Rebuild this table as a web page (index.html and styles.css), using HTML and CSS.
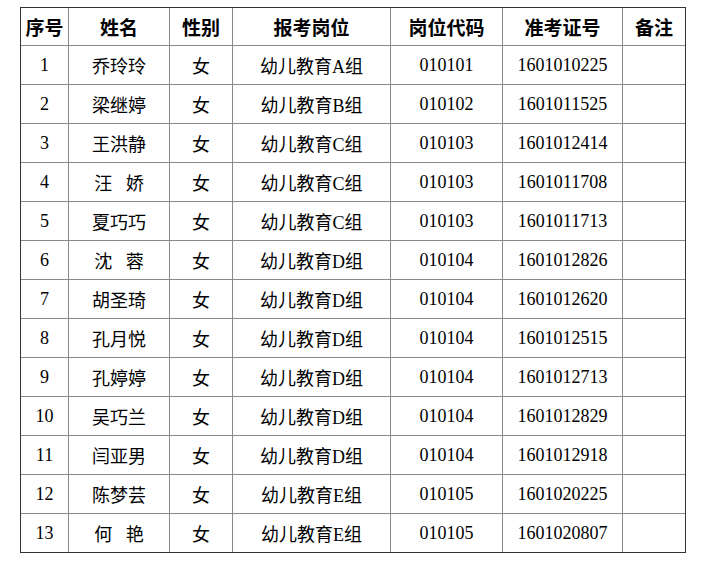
FILE: index.html
```html
<!DOCTYPE html>
<html lang="zh-CN">
<head>
<meta charset="utf-8">
<title>名单</title>
<link rel="stylesheet" href="styles.css">
</head>
<body>
<table class="roster">
  <colgroup>
    <col class="c-no"><col class="c-name"><col class="c-sex"><col class="c-post"><col class="c-code"><col class="c-ticket"><col class="c-note">
  </colgroup>
  <thead>
    <tr class="head-row">
      <th>序号</th><th>姓名</th><th>性别</th><th>报考岗位</th><th>岗位代码</th><th>准考证号</th><th class="last-col">备注</th>
    </tr>
  </thead>
  <tbody>
    <tr><td>1</td><td>乔玲玲</td><td>女</td><td>幼儿教育A组</td><td>010101</td><td>1601010225</td><td class="last-col"></td></tr>
    <tr><td>2</td><td>梁继婷</td><td>女</td><td>幼儿教育B组</td><td>010102</td><td>1601011525</td><td class="last-col"></td></tr>
    <tr><td>3</td><td>王洪静</td><td>女</td><td>幼儿教育C组</td><td>010103</td><td>1601012414</td><td class="last-col"></td></tr>
    <tr><td>4</td><td>汪&ensp;&nbsp;娇</td><td>女</td><td>幼儿教育C组</td><td>010103</td><td>1601011708</td><td class="last-col"></td></tr>
    <tr><td>5</td><td>夏巧巧</td><td>女</td><td>幼儿教育C组</td><td>010103</td><td>1601011713</td><td class="last-col"></td></tr>
    <tr><td>6</td><td>沈&ensp;&nbsp;蓉</td><td>女</td><td>幼儿教育D组</td><td>010104</td><td>1601012826</td><td class="last-col"></td></tr>
    <tr><td>7</td><td>胡圣琦</td><td>女</td><td>幼儿教育D组</td><td>010104</td><td>1601012620</td><td class="last-col"></td></tr>
    <tr><td>8</td><td>孔月悦</td><td>女</td><td>幼儿教育D组</td><td>010104</td><td>1601012515</td><td class="last-col"></td></tr>
    <tr><td>9</td><td>孔婷婷</td><td>女</td><td>幼儿教育D组</td><td>010104</td><td>1601012713</td><td class="last-col"></td></tr>
    <tr><td>10</td><td>吴巧兰</td><td>女</td><td>幼儿教育D组</td><td>010104</td><td>1601012829</td><td class="last-col"></td></tr>
    <tr><td>11</td><td>闫亚男</td><td>女</td><td>幼儿教育D组</td><td>010104</td><td>1601012918</td><td class="last-col"></td></tr>
    <tr><td>12</td><td>陈梦芸</td><td>女</td><td>幼儿教育E组</td><td>010105</td><td>1601020225</td><td class="last-col"></td></tr>
    <tr class="last-row"><td>13</td><td>何&ensp;&nbsp;艳</td><td>女</td><td>幼儿教育E组</td><td>010105</td><td>1601020807</td><td class="last-col"></td></tr>
  </tbody>
</table>
</body>
</html>
```

FILE: styles.css
```css
html, body {
  background: #ffffff;
}
body {
  margin: 7px 0 0 20px;
  font-family: "Liberation Serif", "Noto Sans CJK SC", serif;
  color: #000000;
}
.roster {
  border-collapse: separate;
  border-spacing: 0;
  table-layout: fixed;
  width: 666px;
  border: 1px solid #333333;
}
.c-no { width: 48px; }
.c-name { width: 101px; }
.c-sex { width: 63px; }
.c-post { width: 158px; }
.c-code { width: 112px; }
.c-ticket { width: 120px; }
.c-note { width: 62px; }

.roster th,
.roster td {
  padding: 0;
  text-align: center;
  vertical-align: middle;
  border-right: 1px solid #8a8a8a;
  border-bottom: 1px solid #8a8a8a;
  white-space: nowrap;
  overflow: hidden;
}
.roster th {
  font-size: 19px;
  font-weight: bold;
}
.roster td {
  font-size: 18px;
  font-weight: normal;
}
.roster .last-col {
  border-right: none;
}
.head-row {
  height: 38px;
}
.roster tbody tr {
  height: 39px;
}
.roster tbody tr.last-row {
  height: 38px;
}
.roster tr.last-row td {
  border-bottom: none;
}
```
